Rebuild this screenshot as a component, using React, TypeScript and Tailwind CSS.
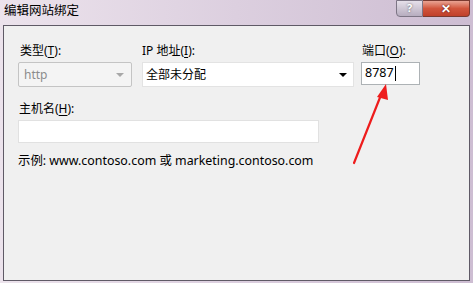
import React from "react";

const font = { fontFamily: '"Noto Sans", "Noto Sans CJK SC", sans-serif' };

function U({ c }: { c: string }) {
  return <span className="underline underline-offset-2">{c}</span>;
}

export default function App() {
  return (
    <div
      className="relative w-[473px] h-[283px] overflow-hidden bg-gradient-to-r from-[#ece3ec] via-[#dccfdf] to-[#cdbdd2] text-[12px] text-black"
      style={font}
    >
      {/* title bar */}
      <div className="flex h-[25px] items-start">
        <div className="pl-[4px] pt-[3px] text-[12.5px] leading-[16px]">编辑网站绑定</div>
        <div className="ml-auto mr-[3px] flex">
          <div className="flex h-[17px] w-[27px] items-center justify-center rounded-bl-[4px] border border-[#7d7585] bg-gradient-to-b from-[#e6e0ea] to-[#b7adbf] text-[11px] font-bold text-white [text-shadow:0_0_2px_#555]">
            ?
          </div>
          <div className="flex h-[17px] w-[47px] items-center justify-center rounded-br-[4px] border border-l-0 border-[#7a3a30] bg-gradient-to-b from-[#e8a393] via-[#d1553c] to-[#c0402a] text-[12px] font-bold text-white [text-shadow:0_0_2px_#400]">
            ✕
          </div>
        </div>
      </div>
      {/* client area */}
      <div className="mx-[3px] h-[256px] border border-[#5f5a66] bg-[#f0f0f0]">
        <div className="flex pl-[14px] pt-[15px]">
          <div className="flex w-[114px] flex-col">
            <div className="h-[20px] pl-[2px] leading-[20px]">
              类型(<U c="T" />):
            </div>
            <div className="mt-[1px] flex h-[25px] items-center justify-between rounded-[2px] border border-[#c4c4c4] bg-[#f4f4f4] pl-[5px] pr-[7px] text-[#8c8c8c]">
              <span>http</span>
              <span className="h-0 w-0 border-x-[4px] border-t-[4px] border-x-transparent border-t-[#a8a8a8]" />
            </div>
          </div>
          <div className="ml-[10px] flex w-[212px] flex-col">
            <div className="h-[20px] leading-[20px]">
              IP 地址(<U c="I" />):
            </div>
            <div className="mt-[1px] flex h-[25px] items-center justify-between border border-[#e3e3e3] bg-white pl-[3px] pr-[6px]">
              <span>全部未分配</span>
              <span className="h-0 w-0 border-x-[4px] border-t-[4px] border-x-transparent border-t-black" />
            </div>
          </div>
          <div className="ml-[7px] flex w-[59px] flex-col">
            <div className="h-[20px] pl-[1px] leading-[20px]">
              端口(<U c="O" />):
            </div>
            <div className="mt-[1px] flex h-[23px] items-center border border-[#adb2b5] bg-white pl-[3px] text-[12.5px]">
              <span>8787</span>
              <span className="ml-[1px] h-[15px] w-[1px] bg-black" />
            </div>
          </div>
        </div>
        <div className="flex w-[330px] flex-col pl-[14px] pt-[12px]">
          <div className="h-[20px] pl-[1px] leading-[20px]">
            主机名(<U c="H" />):
          </div>
          <div className="mt-[1px] h-[23px] w-[301px] border border-[#e1e1e1] bg-white" />
          <div className="mt-[9px] text-[12.4px] leading-[18px]">示例: www.contoso.com 或 marketing.contoso.com</div>
        </div>
      </div>
      {/* red arrow annotation */}
      <svg className="absolute left-0 top-0" width="473" height="283" viewBox="0 0 473 283">
        <line x1="354" y1="163" x2="381" y2="95" stroke="#ee1c1c" strokeWidth="2.2" strokeLinecap="round" />
        <polygon points="386,84 377,97 388,100" fill="#ee1c1c" />
      </svg>
    </div>
  );
}
